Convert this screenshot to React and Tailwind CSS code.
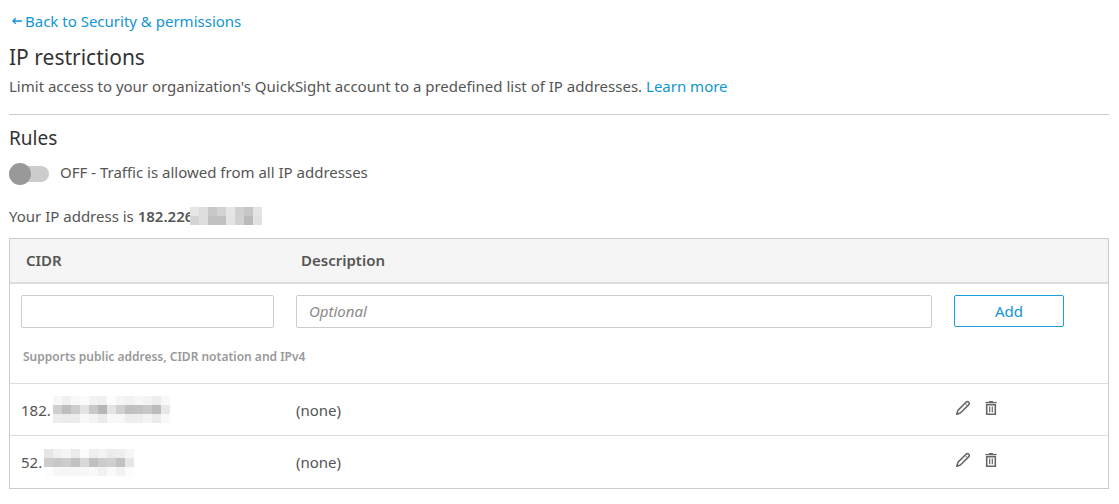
import React, { useState } from "react";

const IP_MASK = [
  ["#e6e6e6", "#dedede", "#c8c8c8", "#d2d2d2", "#e6e6e6", "#d0d0d0", "#c6c6c6", "#e4e4e4"],
  ["#d4d4d4", "#dedede", "#c0c0c0", "#c0c0c0", "#e4e4e4", "#d2d2d2", "#bababa", "#e2e2e2"],
];

const RULES = [
  {
    prefix: "182.",
    description: "(none)",
    mask: [
      ["#f7f7f7", "#f0f0f0", "#f8f8f8", "#fbfbfb", "#f2f2f2", "#f0f0f0", "#fdfdfd", "#f5f5f5", "#f2f2f2", "#f7f7f7", "#f3f3f3", "#eeeeee", "#f8f8f8"],
      ["#cfcfcf", "#bebebe", "#cccccc", "#e4e4e4", "#c8c8c8", "#b6b6b6", "#e4e4e4", "#d0d0d0", "#c0c0c0", "#c2c2c2", "#c8c8c8", "#bcbcbc", "#e8e8e8"],
      ["#ededed", "#ebebeb", "#ececec", "#f9f9f9", "#f3f3f3", "#ebebeb", "#f8f8f8", "#f7f7f7", "#eeeeee", "#eeeeee", "#f4f4f4", "#ebebeb", "#f9f9f9"],
    ],
  },
  {
    prefix: "52.",
    description: "(none)",
    mask: [
      ["#e6e6e6", "#f0f0f0", "#f5f5f5", "#ebebeb", "#fbfbfb", "#eeeeee", "#f3f3f3", "#ebebeb", "#eeeeee", "#f5f5f5"],
      ["#cccccc", "#c8c8c8", "#cccccc", "#c2c2c2", "#d8d8d8", "#c0c0c0", "#cccccc", "#d0d0d0", "#c2c2c2", "#e6e6e6"],
      ["#fdfdfd", "#f7f7f7", "#f6f6f6", "#f6f6f6", "#f6f6f6", "#f8f8f8", "#f2f2f2", "#fafafa", "#f2f2f2", "#fcfcfc"],
    ],
  },
];

function Mosaic({ rows, className }) {
  const w = rows[0].length * 9;
  const h = rows.length * 9;
  return (
    <svg aria-hidden="true" width={w} height={h} viewBox={`0 0 ${w} ${h}`} shapeRendering="crispEdges" className={className}>
      {rows.map((row, y) =>
        row.map((fill, x) => <rect key={`${x}-${y}`} x={x * 9} y={y * 9} width="9" height="9" fill={fill} />)
      )}
    </svg>
  );
}

function PencilIcon() {
  return (
    <svg aria-hidden="true" width="16" height="16" viewBox="0 0 16 16" fill="none" stroke="#666" strokeWidth="1.5" strokeLinejoin="round">
      <path d="M1.8 14.2 L2.9 10.4 L11 2.3 Q12.4 1 13.7 2.2 Q14.9 3.4 13.6 4.9 L5.4 13 Z" />
      <path d="M10 3.4 L12.5 5.9" strokeWidth="1" />
      <path d="M1.2 14.8 L1.9 12.4 L3.6 14.1 Z" fill="#666" stroke="none" />
    </svg>
  );
}

function TrashIcon() {
  return (
    <svg aria-hidden="true" width="16" height="16" viewBox="0 0 16 16" fill="none" stroke="#666">
      <path d="M2.4 2.6 H13.6" strokeWidth="1.4" />
      <path d="M6 1.5 H10" strokeWidth="1" />
      <path d="M3.7 4.7 H12.3 V14.3 H3.7 Z" strokeWidth="1.6" />
      <path d="M6.7 6.5 V12.3 M9.3 6.5 V12.3" strokeWidth="1.2" />
    </svg>
  );
}

export default function App() {
  const [on, setOn] = useState(false);
  return (
    <main className="bg-white pl-[9px] pr-[10px] pt-2 pb-4 font-['Noto_Sans',sans-serif] text-[15px] leading-6 text-[#555]">
      <a href="#security" className="ml-[3px] inline-flex items-center gap-[2px] text-[#1195d4]">
        <svg aria-hidden="true" width="11" height="10" viewBox="0 0 11 10" fill="none" stroke="currentColor" strokeWidth="1.3">
          <path d="M10 5 H1 M3.8 2.2 L1 5 L3.8 7.8" />
        </svg>
        Back to Security &amp; permissions
      </a>
      <h1 className="mt-2 text-[21px] leading-8 text-[#333]">IP restrictions</h1>
      <p className="mt-px border-b border-[#ccc] pb-4">
        Limit access to your organization&apos;s QuickSight account to a predefined list of IP addresses.{" "}
        <a href="#learn" className="text-[#1195d4]">Learn more</a>
      </p>

      <h2 className="mt-[7px] text-[19px] leading-8 text-[#333]">Rules</h2>
      <label className="mt-2 flex items-center gap-[11px]">
        <span className="relative flex h-[22px] w-10 items-center">
          <input type="checkbox" role="switch" checked={on} onChange={(e) => setOn(e.target.checked)} className="peer h-4 w-10 appearance-none rounded-full bg-[#ccc]" />
          <span className="absolute left-0 size-[22px] rounded-full bg-[#999] peer-checked:left-[18px]" />
        </span>
        <span className="pb-1 leading-5">OFF - Traffic is allowed from all IP addresses</span>
      </label>
      <p className="mt-[18px] flex items-center">
        <span>Your IP address is <b className="font-semibold">182.226</b></span>
        <Mosaic rows={IP_MASK} className="relative -ml-[3px]" />
      </p>

      <table className="mt-[10px] w-full table-fixed border-separate border-spacing-0 border border-[#ccc] text-left">
        <colgroup>
          <col className="w-[275px]" />
          <col />
          <col className="w-[165px]" />
        </colgroup>
        <thead>
          <tr className="h-[45px] bg-[#f5f5f5]">
            <th scope="col" className="border-b-2 border-[#ddd] pb-[2px] pl-4 font-semibold">CIDR</th>
            <th scope="col" className="border-b-2 border-[#ddd] pb-[2px] pl-4 font-semibold">Description</th>
            <td className="border-b-2 border-[#ddd]" />
          </tr>
        </thead>
        <tbody>
          <tr className="h-[100px] align-top">
            <td className="border-b border-[#ddd] px-[11px] pt-[11px]">
              <input id="cidr" type="text" aria-label="CIDR" aria-describedby="cidr-hint" className="block h-[33px] w-full rounded-xs border border-[#ccc] px-3 outline-none" />
              <p id="cidr-hint" className="mt-[17px] ml-[2px] text-xs leading-6 font-semibold whitespace-nowrap text-[#999]">Supports public address, CIDR notation and IPv4</p>
            </td>
            <td className="border-b border-[#ddd] px-[11px] pt-[11px]">
              <input type="text" aria-label="Description" placeholder="Optional" className="block h-[33px] w-full rounded-xs border border-[#ccc] px-3 pb-[2px] outline-none placeholder:text-[#8a8a8a] placeholder:italic" />
            </td>
            <td className="border-b border-[#ddd] px-[11px] pt-[11px]">
              <button type="button" className="block h-8 w-[110px] rounded-xs border border-[#1f9fd9] text-[#1195d4]">Add</button>
            </td>
          </tr>
          {RULES.map((rule, i) => (
            <tr key={rule.prefix} className="h-[52px]">
              <td className={i === 0 ? "border-b border-[#ddd] px-[11px]" : "px-[11px]"}>
                <div className="flex items-center gap-[2px]">
                  {rule.prefix}
                  <Mosaic rows={rule.mask} />
                </div>
              </td>
              <td className={i === 0 ? "border-b border-[#ddd] px-[11px]" : "px-[11px]"}>{rule.description}</td>
              <td className={i === 0 ? "border-b border-[#ddd] px-3" : "px-3"}>
                <div className="flex gap-3 pb-1">
                  <button type="button" aria-label="Edit rule"><PencilIcon /></button>
                  <button type="button" aria-label="Delete rule"><TrashIcon /></button>
                </div>
              </td>
            </tr>
          ))}
        </tbody>
      </table>
    </main>
  );
}
